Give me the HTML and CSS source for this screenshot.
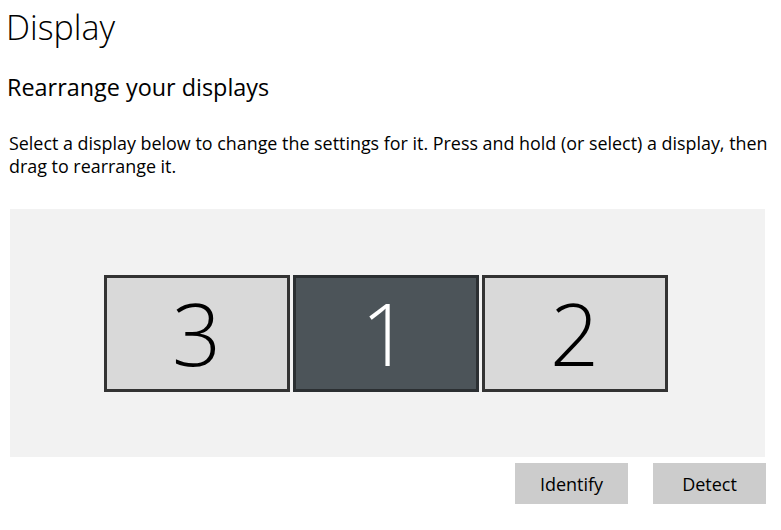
FILE: index.html
```html
<!DOCTYPE html>
<html lang="en">
<head>
  <meta charset="UTF-8">
  <meta name="viewport" content="width=device-width, initial-scale=1.0">
  <title>Display</title>
  <link rel="stylesheet" href="styles.css">
</head>
<body>

  <h1 class="pageTitle">Display</h1>

  <h2 class="sectionTitle">Rearrange your displays</h2>

  <p class="intro">Select a display below to change the settings for it. Press and hold (or select) a display, then drag to rearrange it.</p>

  <div class="arrangePanel">
    <div class="monitorRow">
      <div class="monitor">3</div>
      <div class="monitor selected">1</div>
      <div class="monitor">2</div>
    </div>
  </div>

  <div class="actionButtons">
    <button type="button" class="actionButton">Identify</button>
    <button type="button" class="actionButton">Detect</button>
  </div>

</body>
</html>
```

FILE: styles.css
```css
body {
  font-family: "Open Sans", "Noto Sans", sans-serif;
  margin: 0;
  color: #000;
  background: #fff;
}

.pageTitle {
  font-weight: 300;
  font-size: 34px;
  margin: 0;
  padding: 4px 0 0 6px;
  line-height: 46px;
}

.sectionTitle {
  font-weight: 400;
  font-size: 23.4px;
  margin: 0;
  padding: 22px 0 0 7px;
  line-height: 30px;
}

.intro {
  font-size: 17.9px;
  line-height: 23px;
  margin: 0;
  padding: 30px 4px 0 9px;
}

.arrangePanel {
  background-color: #f2f2f2;
  margin: 31px 16px 0 10px;
  height: 248px;
  display: flex;
  align-items: center;
  justify-content: center;
}

.monitorRow {
  display: flex;
  gap: 3px;
  margin-left: -4px;
}

.monitor {
  width: 180px;
  height: 111px;
  border: 3px solid #333;
  background-color: #d9d9d9;
  display: flex;
  align-items: center;
  justify-content: center;
  font-family: "Open Sans", sans-serif;
  font-weight: 300;
  font-size: 86px;
  line-height: 1;
}

.monitor.selected {
  background-color: #4c5459;
  border-color: #2b2f32;
  color: #fff;
}

.actionButtons {
  display: flex;
  justify-content: flex-end;
  gap: 25px;
  margin: 6px 15px 0 0;
}

.actionButton {
  width: 113px;
  height: 41px;
  background-color: #cccccc;
  border: none;
  font-family: "Open Sans", sans-serif;
  font-size: 18px;
  color: #000;
  padding: 0;
  cursor: pointer;
}

.actionButton:hover {
  background-color: #bbbbbb;
}
```
